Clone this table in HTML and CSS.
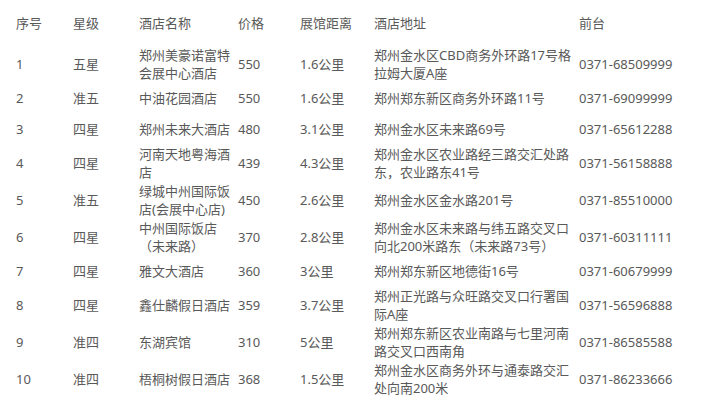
FILE: index.html
```html
<!DOCTYPE html>
<html lang="zh-CN">
<head>
<meta charset="utf-8">
<link rel="stylesheet" href="styles.css">
</head>
<body>
<table class="hotels">
  <colgroup>
    <col class="c-no"><col class="c-star"><col class="c-name"><col class="c-price"><col class="c-dist"><col class="c-addr"><col class="c-tel">
  </colgroup>
  <thead>
    <tr class="head"><td>序号</td><td>星级</td><td>酒店名称</td><td>价格</td><td>展馆距离</td><td>酒店地址</td><td>前台</td></tr>
  </thead>
  <tbody>
    <tr><td>1</td><td>五星</td><td>郑州美豪诺富特会展中心酒店</td><td>550</td><td>1.6公里</td><td>郑州金水区CBD商务外环路17号格拉姆大厦A座</td><td>0371-68509999</td></tr>
    <tr><td>2</td><td>准五</td><td>中油花园酒店</td><td>550</td><td>1.6公里</td><td>郑州郑东新区商务外环路11号</td><td>0371-69099999</td></tr>
    <tr><td>3</td><td>四星</td><td>郑州未来大酒店</td><td>480</td><td>3.1公里</td><td>郑州金水区未来路69号</td><td>0371-65612288</td></tr>
    <tr><td>4</td><td>四星</td><td>河南天地粤海酒店</td><td>439</td><td>4.3公里</td><td>郑州金水区农业路经三路交汇处路东，农业路东41号</td><td>0371-56158888</td></tr>
    <tr><td>5</td><td>准五</td><td>绿城中州国际饭店(会展中心店)</td><td>450</td><td>2.6公里</td><td>郑州金水区金水路201号</td><td>0371-85510000</td></tr>
    <tr><td>6</td><td>四星</td><td>中州国际饭店（未来路）</td><td>370</td><td>2.8公里</td><td>郑州金水区未来路与纬五路交叉口向北200米路东（未来路73号）</td><td>0371-60311111</td></tr>
    <tr><td>7</td><td>四星</td><td>雅文大酒店</td><td>360</td><td>3公里</td><td>郑州郑东新区地德街16号</td><td>0371-60679999</td></tr>
    <tr class="tall"><td>8</td><td>四星</td><td>鑫仕麟假日酒店</td><td>359</td><td>3.7公里</td><td>郑州正光路与众旺路交叉口行署国际A座</td><td>0371-56596888</td></tr>
    <tr><td>9</td><td>准四</td><td>东湖宾馆</td><td>310</td><td>5公里</td><td>郑州郑东新区农业南路与七里河南路交叉口西南角</td><td>0371-86585588</td></tr>
    <tr><td>10</td><td>准四</td><td>梧桐树假日酒店</td><td>368</td><td>1.5公里</td><td>郑州金水区商务外环与通泰路交汇处向南200米</td><td>0371-86233666</td></tr>
  </tbody>
</table>
</body>
</html>
```

FILE: styles.css
```css
html, body {
  margin: 0;
  padding: 0;
  background: #ffffff;
}

body {
  font-family: "Noto Sans", "Noto Sans CJK SC", sans-serif;
  font-size: 13px;
  color: #595959;
}

.hotels {
  margin: 3px 0 0 16px;
  border-collapse: collapse;
  border-spacing: 0;
  table-layout: fixed;
  width: 690px;
}

.c-no { width: 57px; }
.c-star { width: 66px; }
.c-name { width: 99px; }
.c-price { width: 62px; }
.c-dist { width: 74px; }
.c-addr { width: 205px; }
.c-tel { width: 127px; }

.hotels td {
  padding: 0.5px 0;
  line-height: 18px;
  vertical-align: middle;
  text-align: left;
}

.hotels tbody tr {
  height: 31px;
}

.hotels tr.head {
  height: 42px;
}

.hotels tr.head td {
  vertical-align: top;
  padding-top: 11px;
}

.hotels tr.tall {
  height: 37px;
}
```
